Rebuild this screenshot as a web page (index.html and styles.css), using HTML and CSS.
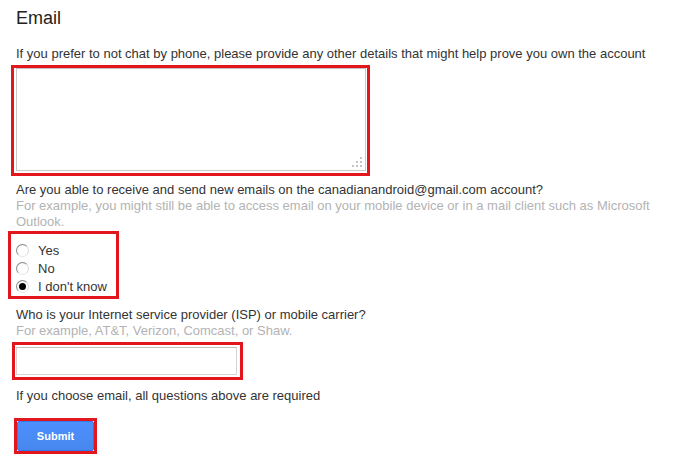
FILE: index.html
```html
<!DOCTYPE html>
<html>
<head>
<meta charset="utf-8">
<link rel="stylesheet" href="styles.css">
</head>
<body>
<div class="page">
  <h2 class="title">Email</h2>
  <p class="q q-first">If you prefer to not chat by phone, please provide any other details that might help prove you own the account</p>
  <div class="mark mark-area">
    <div class="area-wrap">
      <textarea class="area"></textarea>
      <svg class="grip" width="11" height="11" viewBox="0 0 11 11"><g fill="#c4c4c4"><rect x="8" y="0" width="2" height="2"/><rect x="4" y="4" width="2" height="2"/><rect x="8" y="4" width="2" height="2"/><rect x="0" y="8" width="2" height="2"/><rect x="4" y="8" width="2" height="2"/><rect x="8" y="8" width="2" height="2"/></g></svg>
    </div>
  </div>
  <p class="q q-able">Are you able to receive and send new emails on the canadianandroid@gmail.com account?</p>
  <p class="hint">For example, you might still be able to access email on your mobile device or in a mail client such as Microsoft Outlook.</p>
  <div class="mark mark-radios">
    <label class="opt"><input type="radio" name="recv" class="radio"><span>Yes</span></label>
    <label class="opt"><input type="radio" name="recv" class="radio"><span>No</span></label>
    <label class="opt"><input type="radio" name="recv" class="radio" checked><span>I don't know</span></label>
  </div>
  <p class="q q-isp">Who is your Internet service provider (ISP) or mobile carrier?</p>
  <p class="hint">For example, AT&amp;T, Verizon, Comcast, or Shaw.</p>
  <div class="mark mark-input">
    <input type="text" class="field">
  </div>
  <p class="q q-req">If you choose email, all questions above are required</p>
  <div class="mark mark-btn">
    <button class="submit" type="button">Submit</button>
  </div>
</div>
</body>
</html>
```
FILE: styles.css
```css
html, body {
  margin: 0;
  padding: 0;
  background: #fff;
}
body {
  font-family: "Liberation Sans", Arial, sans-serif;
  font-size: 13px;
  color: #333;
}
.page {
  padding: 7px 0 0 16px;
  width: 645px;
}
.title {
  margin: 0;
  font-size: 18px;
  line-height: 22px;
  font-weight: normal;
  color: #222;
}
.q {
  margin: 0;
  line-height: 16px;
  color: #333;
}
.q-first { margin-top: 17px; }
.q-able { margin-top: 6px; }
.q-isp { margin-top: 8px; }
.q-req { margin-top: 8px; }
.hint {
  margin: 0;
  line-height: 16px;
  color: #b3b3b3;
}
.mark {
  border: 3px solid #e3161d;
  box-sizing: border-box;
}
.mark-area {
  margin: 3px 0 0 -5px;
  width: 359px;
  padding: 0 1px 2px 2px;
}
.area-wrap {
  position: relative;
}
.area {
  display: block;
  box-sizing: border-box;
  width: 350px;
  height: 103px;
  margin: 0;
  border: 1px solid #c8c8c8;
  border-top-color: #c0c0c0;
  resize: none;
  outline: none;
}
.grip {
  position: absolute;
  right: 3px;
  bottom: 3px;
}
.mark-radios {
  margin: 1px 0 0 -8px;
  width: 111px;
  padding: 7px 0 1px 5px;
}
.opt {
  display: flex;
  align-items: center;
  height: 18px;
  color: #333;
}
.radio {
  appearance: none;
  -webkit-appearance: none;
  margin: 0 9px 0 0;
  width: 13px;
  height: 13px;
  border-radius: 50%;
  border: 1px solid;
  border-color: #8a8a8a #d8d8d8 #e6e6e6 #8a8a8a;
  background: radial-gradient(circle at 60% 60%, #fff 40%, #eee 100%);
  box-sizing: border-box;
  position: relative;
}
.radio:checked::after {
  content: "";
  position: absolute;
  left: 2px;
  top: 2px;
  width: 7px;
  height: 7px;
  border-radius: 50%;
  background: #000;
}
.mark-input {
  margin: 3px 0 0 -4px;
  width: 231px;
  padding: 2px 3px 2px 1px;
}
.field {
  display: block;
  box-sizing: border-box;
  width: 221px;
  height: 28px;
  margin: 0;
  border: 1px solid #d4d4d4;
  border-top-color: #c0c0c0;
  outline: none;
}
.mark-btn {
  margin: 14px 0 0 -2px;
  width: 83px;
  padding: 0;
}
.submit {
  display: block;
  width: 77px;
  height: 30px;
  margin: 0;
  border: 1px solid #3079ed;
  border-radius: 2px;
  background: linear-gradient(#4d90fe, #4787ed);
  color: #fff;
  font-family: "Liberation Sans", Arial, sans-serif;
  font-size: 11px;
  font-weight: bold;
}
```
